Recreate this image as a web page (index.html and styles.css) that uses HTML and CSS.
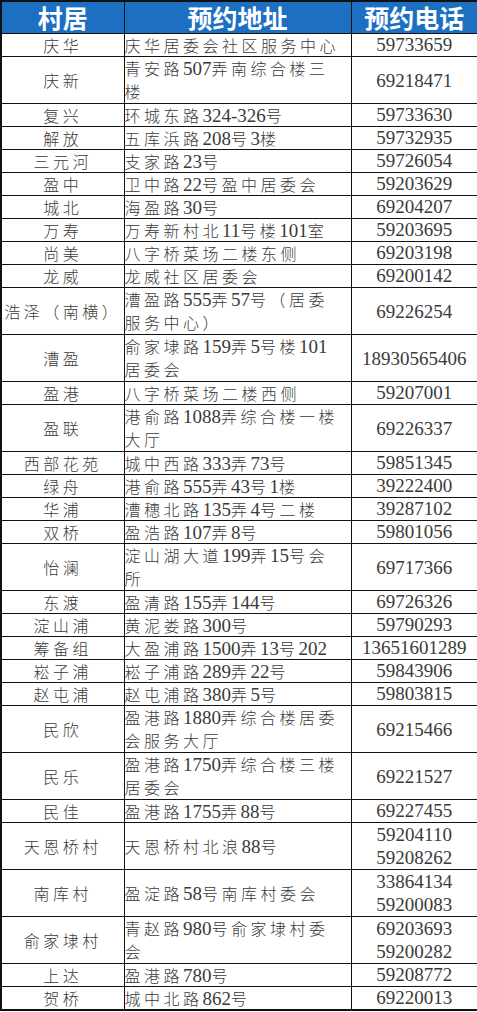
FILE: index.html
```html
<!DOCTYPE html>
<html lang="zh-CN">
<head>
<meta charset="utf-8">
<title>预约地址</title>
<link rel="stylesheet" href="styles.css">
</head>
<body>
<table class="sheet">
  <colgroup><col class="c1"><col class="c2"><col class="c3"></colgroup>
  <thead>
    <tr><th>村居</th><th>预约地址</th><th>预约电话</th></tr>
  </thead>
  <tbody>
    <tr><td class="v">庆华</td><td class="a">庆华居委会社区服务中心</td><td class="t">59733659</td></tr>
    <tr class="d"><td class="v">庆新</td><td class="a">青安路<span class="n">507</span>弄南综合楼三<br>楼</td><td class="t">69218471</td></tr>
    <tr><td class="v">复兴</td><td class="a">环城东路<span class="n">324-326</span>号</td><td class="t">59733630</td></tr>
    <tr><td class="v">解放</td><td class="a">五库浜路<span class="n">208</span>号<span class="n">3</span>楼</td><td class="t">59732935</td></tr>
    <tr><td class="v">三元河</td><td class="a">支家路<span class="n">23</span>号</td><td class="t">59726054</td></tr>
    <tr><td class="v">盈中</td><td class="a">卫中路<span class="n">22</span>号盈中居委会</td><td class="t">59203629</td></tr>
    <tr><td class="v">城北</td><td class="a">海盈路<span class="n">30</span>号</td><td class="t">69204207</td></tr>
    <tr><td class="v">万寿</td><td class="a">万寿新村北<span class="n">11</span>号楼<span class="n">101</span>室</td><td class="t">59203695</td></tr>
    <tr><td class="v">尚美</td><td class="a">八字桥菜场二楼东侧</td><td class="t">69203198</td></tr>
    <tr><td class="v">龙威</td><td class="a">龙威社区居委会</td><td class="t">69200142</td></tr>
    <tr class="d"><td class="v">浩泽（南横）</td><td class="a">漕盈路<span class="n">555</span>弄<span class="n">57</span>号（居委<br>服务中心）</td><td class="t">69226254</td></tr>
    <tr class="d"><td class="v">漕盈</td><td class="a">俞家埭路<span class="n">159</span>弄<span class="n">5</span>号楼<span class="n">101</span><br>居委会</td><td class="t">18930565406</td></tr>
    <tr><td class="v">盈港</td><td class="a">八字桥菜场二楼西侧</td><td class="t">59207001</td></tr>
    <tr class="d"><td class="v">盈联</td><td class="a">港俞路<span class="n">1088</span>弄综合楼一楼<br>大厅</td><td class="t">69226337</td></tr>
    <tr><td class="v">西部花苑</td><td class="a">城中西路<span class="n">333</span>弄<span class="n">73</span>号</td><td class="t">59851345</td></tr>
    <tr><td class="v">绿舟</td><td class="a">港俞路<span class="n">555</span>弄<span class="n">43</span>号<span class="n">1</span>楼</td><td class="t">39222400</td></tr>
    <tr><td class="v">华浦</td><td class="a">漕穗北路<span class="n">135</span>弄<span class="n">4</span>号二楼</td><td class="t">39287102</td></tr>
    <tr><td class="v">双桥</td><td class="a">盈浩路<span class="n">107</span>弄<span class="n">8</span>号</td><td class="t">59801056</td></tr>
    <tr class="d"><td class="v">怡澜</td><td class="a">淀山湖大道<span class="n">199</span>弄<span class="n">15</span>号会<br>所</td><td class="t">69717366</td></tr>
    <tr><td class="v">东渡</td><td class="a">盈清路<span class="n">155</span>弄<span class="n">144</span>号</td><td class="t">69726326</td></tr>
    <tr><td class="v">淀山浦</td><td class="a">黄泥娄路<span class="n">300</span>号</td><td class="t">59790293</td></tr>
    <tr><td class="v">筹备组</td><td class="a">大盈浦路<span class="n">1500</span>弄<span class="n">13</span>号<span class="n">202</span></td><td class="t">13651601289</td></tr>
    <tr><td class="v">崧子浦</td><td class="a">崧子浦路<span class="n">289</span>弄<span class="n">22</span>号</td><td class="t">59843906</td></tr>
    <tr><td class="v">赵屯浦</td><td class="a">赵屯浦路<span class="n">380</span>弄<span class="n">5</span>号</td><td class="t">59803815</td></tr>
    <tr class="d"><td class="v">民欣</td><td class="a">盈港路<span class="n">1880</span>弄综合楼居委<br>会服务大厅</td><td class="t">69215466</td></tr>
    <tr class="d"><td class="v">民乐</td><td class="a">盈港路<span class="n">1750</span>弄综合楼三楼<br>居委会</td><td class="t">69221527</td></tr>
    <tr><td class="v">民佳</td><td class="a">盈港路<span class="n">1755</span>弄<span class="n">88</span>号</td><td class="t">69227455</td></tr>
    <tr class="d"><td class="v">天恩桥村</td><td class="a">天恩桥村北浪<span class="n">88</span>号</td><td class="t">59204110<br>59208262</td></tr>
    <tr class="d"><td class="v">南库村</td><td class="a">盈淀路<span class="n">58</span>号南库村委会</td><td class="t">33864134<br>59200083</td></tr>
    <tr class="d"><td class="v">俞家埭村</td><td class="a">青赵路<span class="n">980</span>号俞家埭村委<br>会</td><td class="t">69203693<br>59200282</td></tr>
    <tr><td class="v">上达</td><td class="a">盈港路<span class="n">780</span>号</td><td class="t">59208772</td></tr>
    <tr><td class="v">贺桥</td><td class="a">城中北路<span class="n">862</span>号</td><td class="t">69220013</td></tr>
  </tbody>
</table>
</body>
</html>
```

FILE: styles.css
```css
html, body {
  margin: 0;
  padding: 0;
  background: #ffffff;
}

.sheet {
  width: 477px;
  table-layout: fixed;
  border-collapse: collapse;
  border: 2px solid #111;
  font-family: "Liberation Serif", "Noto Sans CJK SC", serif;
  color: #3a3a3a;
}

.c1 { width: 123px; }
.c2 { width: 227px; }
.c3 { width: 127px; }

.sheet th {
  height: 31px;
  padding: 0;
  background: #1d6fc2;
  color: #ffffff;
  font-family: "Noto Sans CJK SC", sans-serif;
  font-weight: 700;
  font-size: 25px;
  line-height: 31px;
  text-align: center;
  vertical-align: middle;
  border: 1px solid #111;
}

.sheet td {
  height: 22px;
  padding: 0;
  border: 1px solid #111;
  line-height: 22px;
  vertical-align: middle;
  white-space: nowrap;
}

.sheet tr.d td {
  height: 46px;
}

.v,
.a {
  font-family: "Noto Sans CJK SC", sans-serif;
  font-weight: 300;
  font-size: 16px;
  letter-spacing: 3.5px;
}

.v {
  text-align: center;
  padding-left: 3px;
}

.a {
  text-align: left;
  padding-left: 5px;
}

.n {
  font-family: "Liberation Serif", serif;
  font-size: 19px;
  line-height: 1;
  letter-spacing: 0;
}

.t {
  text-align: center;
  font-family: "Liberation Serif", serif;
  font-size: 19px;
}

.sheet tr.d .a,
.sheet tr.d .t {
  line-height: 23px;
}
```
